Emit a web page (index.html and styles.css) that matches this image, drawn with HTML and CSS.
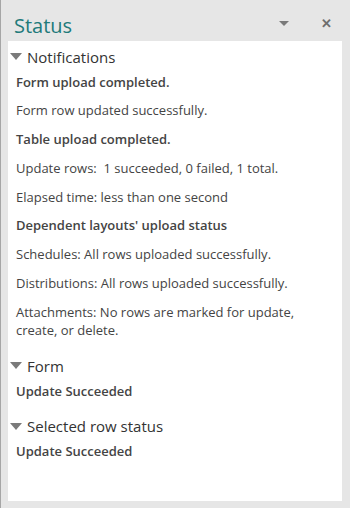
FILE: index.html
```html
<!DOCTYPE html>
<html lang="en">
<head>
  <meta charset="UTF-8">
  <title>Status</title>
  <link rel="stylesheet" href="styles.css">
</head>
<body>

  <div id="pane">
    <div class="pane-header">
      <h1>Status</h1>
      <span class="menu-arrow"></span>
      <span class="close">&#x2715;</span>
    </div>

    <div class="pane-body">
      <div class="section">
        <div class="section-title"><span class="caret"></span>Notifications</div>
        <p class="bold">Form upload completed.</p>
        <p>Form row updated successfully.</p>
        <p class="bold">Table upload completed.</p>
        <p>Update rows:&nbsp; 1 succeeded, 0 failed, 1 total.</p>
        <p>Elapsed time: less than one second</p>
        <p class="bold">Dependent layouts' upload status</p>
        <p>Schedules: All rows uploaded successfully.</p>
        <p>Distributions: All rows uploaded successfully.</p>
        <p>Attachments: No rows are marked for update, create, or delete.</p>
      </div>

      <div class="section">
        <div class="section-title"><span class="caret"></span>Form</div>
        <p class="bold">Update Succeeded</p>
      </div>

      <div class="section">
        <div class="section-title"><span class="caret"></span>Selected row status</div>
        <p class="bold">Update Succeeded</p>
      </div>
    </div>
  </div>

</body>
</html>
```

FILE: styles.css
```css
body {
  font-family: 'Open Sans', 'Noto Sans', Arial, sans-serif;
  margin: 0;
  padding: 0;
  background-color: #e6e6e6;
  height: 508px;
  width: 350px;
  overflow: hidden;
}

#pane {
  height: 100%;
  border-left: 1px solid #a6a6a6;
  box-sizing: border-box;
  display: flex;
  flex-direction: column;
}

.pane-header {
  height: 41px;
  box-sizing: border-box;
  display: flex;
  align-items: center;
  padding: 5px 0 0 13px;
}

h1 {
  margin: 5px 0 0 0;
  font-size: 20px;
  font-weight: normal;
  color: #217a7a;
  flex: 1;
}

.menu-arrow {
  width: 0;
  height: 0;
  border-left: 5px solid transparent;
  border-right: 5px solid transparent;
  border-top: 5px solid #7a7a7a;
  margin-right: 32px;
}

.close {
  font-size: 13px;
  color: #6e6e6e;
  margin-right: 18px;
  font-weight: bold;
}

.pane-body {
  background-color: white;
  margin: 0 8px 7px 7px;
  flex: 1;
  padding-top: 4.5px;
}

.section {
  margin-bottom: 10px;
}

.section-title {
  display: flex;
  align-items: center;
  font-size: 15px;
  color: #333;
  height: 22px;
}

.caret {
  width: 0;
  height: 0;
  border-left: 6px solid transparent;
  border-right: 6px solid transparent;
  border-top: 7px solid #7a7a7a;
  margin: 0 5px 0 2px;
}

p {
  margin: 0;
  padding: 5px 8px 5.8px 8px;
  font-size: 13px;
  line-height: 18px;
  color: #444;
}

p.bold {
  font-weight: 600;
}
```
